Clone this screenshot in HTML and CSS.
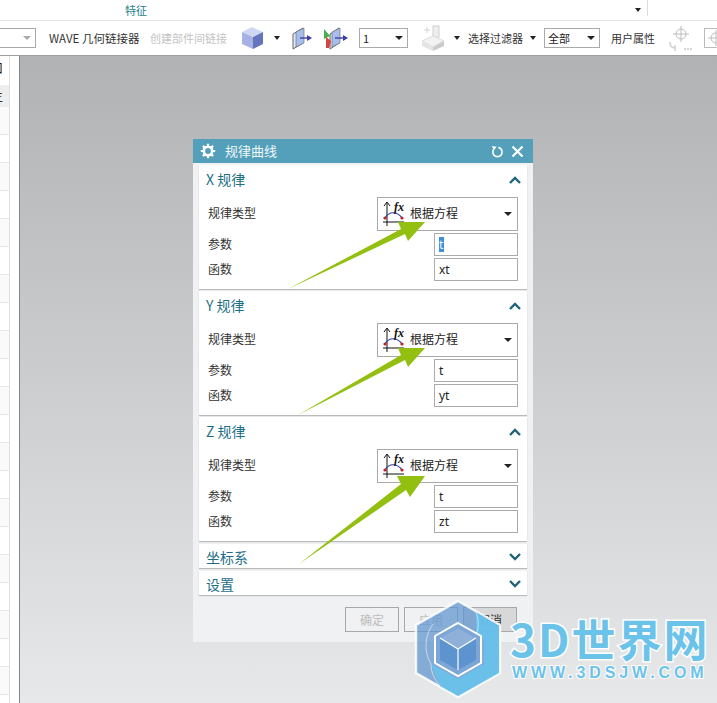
FILE: index.html
```html
<!DOCTYPE html>
<html lang="zh-CN">

<head>
    <meta charset="UTF-8">
    <meta name="viewport" content="width=device-width, initial-scale=1.0">
    <title>规律曲线</title>
    <link rel="stylesheet" href="styles.css">
</head>

<body>
    <!-- 顶部工具栏 -->
    <div class="tabs">
        <span class="tab-name">特征</span>
        <span class="caret tab-caret"></span>
        <span class="tab-line"></span>
    </div>
    <div class="toolbar">
        <div class="combo combo-cut"><span class="caret caret-off"></span></div>
        <span class="tool-text t-wave">WAVE 几何链接器</span>
        <span class="tool-text off t-link">创建部件间链接</span>
        <svg class="i-cube" width="23" height="24" viewBox="0 0 23 24">
            <polygon points="1,6 11,1 22,6 12,11" fill="#cfd8f2" />
            <polygon points="1,6 12,11 12,23 1,18" fill="#a6b2e4" />
            <polygon points="12,11 22,6 22,18 12,23" fill="#6674bb" />
        </svg>
        <span class="caret c-cube"></span>
        <svg class="i-face" width="21" height="24" viewBox="0 0 21 24">
            <polygon points="2,8 12,2 12,17 2,23" fill="#dfe6f6" stroke="#666" />
            <polygon points="5,6 13,2 13,17 5,21" fill="#a9bdec" stroke="#666" stroke-width=".6" />
            <path d="M9 12h8" stroke="#3c3fa8" stroke-width="1.4" />
            <polygon points="16,9 21,12 16,15" fill="#3c3fa8" />
        </svg>
        <svg class="i-face2" width="25" height="24" viewBox="0 0 25 24">
            <polygon points="7,8 16,2 16,17 7,23" fill="#dfe6f6" stroke="#666" />
            <polygon points="9,6 17,2 17,17 9,21" fill="#a9bdec" stroke="#666" stroke-width=".6" />
            <path d="M12 12h9" stroke="#3c3fa8" stroke-width="1.4" />
            <polygon points="20,9 25,12 20,15" fill="#3c3fa8" />
            <polygon points="1,3 7,10 1,13" fill="#45b04a" />
            <polygon points="3,11 8,15 6,22 3,22" fill="#d8433f" />
        </svg>
        <div class="combo combo-num"><span>1</span><span class="caret"></span></div>
        <svg class="i-filter" width="24" height="26" viewBox="0 0 24 26">
            <path d="M3 5h6M6 2v6" stroke="#d4d4d4" />
            <rect x="12" y="1" width="6" height="11" fill="#eee" stroke="#d0d0d0" />
            <polygon points="1,16 12,11 23,16 12,22" fill="#f2f2f2" stroke="#ddd" />
            <polygon points="1,16 12,22 12,26 1,21" fill="#e4e4e4" />
            <polygon points="12,22 23,16 23,21 12,26" fill="#cbcbcb" />
        </svg>
        <span class="caret c-filter"></span>
        <span class="tool-text t-filter">选择过滤器</span>
        <span class="caret c-filter2"></span>
        <div class="combo combo-all"><span>全部</span><span class="caret"></span></div>
        <span class="tool-text t-attr">用户属性</span>
        <svg class="i-snap" width="24" height="26" viewBox="0 0 24 26">
            <circle cx="12" cy="9" r="5" fill="none" stroke="#bdbdbd" />
            <path d="M12 1v16M4 9h16" stroke="#bdbdbd" />
            <path d="M1 17c0 4 2 6 5 6M6 20v6" stroke="#cdd4cd" stroke-width="1.6" fill="none" />
            <path d="M15 24h2M18 24h2M21 24h2" stroke="#aaa" />
        </svg>
        <div class="snap-box">
            <svg width="18" height="18" viewBox="0 0 18 18">
                <circle cx="11" cy="9" r="5" fill="none" stroke="#bdbdbd" />
                <path d="M11 1v16M3 9h15" stroke="#bdbdbd" />
            </svg>
        </div>
    </div>

    <div class="main">
        <div class="sidebar">
            <div class="side-list">
                <div class="side-top">口</div>
                <div class="side-sel">主</div>
            </div>
        </div>

        <div class="canvas">
            <!-- 对话框 -->
            <div class="dialog">
                <div class="dialog-head">
                    <svg width="16" height="16" viewBox="0 0 16 16">
                        <circle cx="8" cy="8" r="4.2" fill="none" stroke="#fff" stroke-width="2.6" />
                        <path d="M8 .8v3M8 12.2v3M.8 8h3M12.2 8h3M2.9 2.9 5 5M11 11l2.1 2.1M13.1 2.9 11 5M5 11l-2.1 2.1" stroke="#fff" stroke-width="2.2" />
                    </svg>
                    <span class="dialog-title">规律曲线</span>
                    <svg class="head-reset" width="13" height="13" viewBox="0 0 14 14">
                        <path d="M8 2.6a5 5 0 1 1-5.4 2.4" fill="none" stroke="#fff" stroke-width="1.8" />
                        <polygon points="1,1 6,2 3,6" fill="#fff" />
                    </svg>
                    <svg width="13" height="13" viewBox="0 0 13 13">
                        <path d="M1.5 1.5l10 10M11.5 1.5l-10 10" stroke="#fff" stroke-width="2.2" />
                    </svg>
                </div>
                <div class="dialog-body">
                    <div class="panel">
                        <div class="panel-title"><span>X 规律</span><svg class="chev" width="12" height="8" viewBox="0 0 12 8"><path d="M1 7l5-5 5 5" fill="none" stroke="#1f6478" stroke-width="2.4" /></svg></div>
                        <div class="law-row">
                            <span>规律类型</span>
                            <div class="law-select">
                                <svg width="28" height="28" viewBox="0 0 28 28">
                                    <path d="M5 26V3M2 6l3-4 3 4M1 22h21" fill="none" stroke="#111" />
                                    <path d="M3 18c4-7 12-7 17 0" fill="none" stroke="#2b3fa8" stroke-width="1.2" />
                                    <circle cx="3" cy="18" r="1.6" fill="#b22" />
                                    <circle cx="20" cy="18" r="1.6" fill="#b22" />
                                    <text x="12" y="11" class="fx">fx</text>
                                </svg>
                                <span class="law-name">根据方程</span>
                                <span class="caret"></span>
                            </div>
                        </div>
                        <div class="field-row"><span>参数</span><div class="field"><span class="picked">t</span></div></div>
                        <div class="field-row"><span>函数</span><div class="field">xt</div></div>
                    </div>

                    <div class="panel">
                        <div class="panel-title"><span>Y 规律</span><svg class="chev" width="12" height="8" viewBox="0 0 12 8"><path d="M1 7l5-5 5 5" fill="none" stroke="#1f6478" stroke-width="2.4" /></svg></div>
                        <div class="law-row">
                            <span>规律类型</span>
                            <div class="law-select">
                                <svg width="28" height="28" viewBox="0 0 28 28">
                                    <path d="M5 26V3M2 6l3-4 3 4M1 22h21" fill="none" stroke="#111" />
                                    <path d="M3 18c4-7 12-7 17 0" fill="none" stroke="#2b3fa8" stroke-width="1.2" />
                                    <circle cx="3" cy="18" r="1.6" fill="#b22" />
                                    <circle cx="20" cy="18" r="1.6" fill="#b22" />
                                    <text x="12" y="11" class="fx">fx</text>
                                </svg>
                                <span class="law-name">根据方程</span>
                                <span class="caret"></span>
                            </div>
                        </div>
                        <div class="field-row"><span>参数</span><div class="field">t</div></div>
                        <div class="field-row"><span>函数</span><div class="field">yt</div></div>
                    </div>

                    <div class="panel">
                        <div class="panel-title"><span>Z 规律</span><svg class="chev" width="12" height="8" viewBox="0 0 12 8"><path d="M1 7l5-5 5 5" fill="none" stroke="#1f6478" stroke-width="2.4" /></svg></div>
                        <div class="law-row">
                            <span>规律类型</span>
                            <div class="law-select">
                                <svg width="28" height="28" viewBox="0 0 28 28">
                                    <path d="M5 26V3M2 6l3-4 3 4M1 22h21" fill="none" stroke="#111" />
                                    <path d="M3 18c4-7 12-7 17 0" fill="none" stroke="#2b3fa8" stroke-width="1.2" />
                                    <circle cx="3" cy="18" r="1.6" fill="#b22" />
                                    <circle cx="20" cy="18" r="1.6" fill="#b22" />
                                    <text x="12" y="11" class="fx">fx</text>
                                </svg>
                                <span class="law-name">根据方程</span>
                                <span class="caret"></span>
                            </div>
                        </div>
                        <div class="field-row"><span>参数</span><div class="field">t</div></div>
                        <div class="field-row"><span>函数</span><div class="field">zt</div></div>
                    </div>

                    <div class="panel panel-shut">
                        <div class="panel-title"><span>坐标系</span><svg class="chev" width="12" height="8" viewBox="0 0 12 8"><path d="M1 1l5 5 5-5" fill="none" stroke="#1f6478" stroke-width="2.4" /></svg></div>
                    </div>
                    <div class="panel panel-shut">
                        <div class="panel-title"><span>设置</span><svg class="chev" width="12" height="8" viewBox="0 0 12 8"><path d="M1 1l5 5 5-5" fill="none" stroke="#1f6478" stroke-width="2.4" /></svg></div>
                    </div>

                    <div class="dialog-foot">
                        <button class="btn" disabled>确定</button>
                        <button class="btn" disabled>应用</button>
                        <button class="btn btn-cancel">取消</button>
                    </div>
                </div>
            </div>
        </div>
    </div>

    <!-- 绿色箭头 -->
    <svg class="arrows" width="717" height="703" viewBox="0 0 717 703">
        <polygon points="288,289 401,229 398,222 425,222 408,241 405,234" />
        <polygon points="298,415 401,355 398,348 425,348 408,367 405,360" />
        <polygon points="299,564 401,484 397,476 425,476 410,497 406,490" />
    </svg>

    <!-- 水印 -->
    <div class="mark">
        <svg width="90" height="102" viewBox="0 0 90 102">
            <polygon points="45,3 87,27 87,75 45,99 3,75 3,27" fill="#5d94cf" fill-opacity=".72" stroke="#fff" stroke-opacity=".85" stroke-width="2.5" />
            <path d="M63 14 86 28v47L45 98 27 88 18 66l27 15 26-15V41l-8-5z" fill="#68c2ec" fill-opacity=".9" />
            <path d="M63 14c3 9 3 16 0 22M18 66c-7-12-7-27 2-40M27 88c-6-7-9-14-9-22" fill="none" stroke="#fff" stroke-opacity=".55" />
            <polygon points="45,25 68,38 68,65 45,78 22,65 22,38" fill="#7ba6d6" stroke="#fff" stroke-width="2" />
            <polygon points="45,30 63,40 63,62 45,72 27,62 27,40" fill="#5d94cf" />
            <polygon points="45,30 63,40 45,51 27,40" fill="#8fb0d8" />
            <path d="M45 51v21M45 51 27 40M45 51l18-11" stroke="#fff" stroke-width="1.2" />
        </svg>
        <div class="mark-text">
            <div class="mark-name">3D世界网</div>
            <div class="mark-url">WWW.3DSJW.COM</div>
        </div>
    </div>
</body>

</html>
```

FILE: styles.css
```css
* {
    box-sizing: border-box;
}

body {
    margin: 0;
    width: 717px;
    height: 703px;
    overflow: hidden;
    position: relative;
    display: flex;
    flex-direction: column;
    font-family: "Noto Sans CJK SC", "Noto Sans", sans-serif;
    font-size: 12px;
    color: #333;
    background: #fff;
}

.caret {
    display: inline-block;
    width: 0;
    height: 0;
    flex: none;
    border-left: 4px solid transparent;
    border-right: 4px solid transparent;
    border-top: 4px solid #222;
}

.caret-off {
    border-top-color: #aaa;
}

/* 顶部 */
.tabs {
    height: 21px;
    flex: none;
    display: flex;
    align-items: center;
    padding-left: 125px;
    border-bottom: 1px solid #e2e2e2;
}

.tab-name {
    font-size: 11px;
    color: #1d7d8c;
}

.tab-caret {
    margin-left: 488px;
    border-left-width: 3px;
    border-right-width: 3px;
}

.tab-line {
    width: 1px;
    height: 16px;
    margin-left: 6px;
    margin-top: -4px;
    background: #ddd;
}

.toolbar {
    height: 35px;
    flex: none;
    display: flex;
    align-items: center;
    white-space: nowrap;
    overflow: hidden;
    border-bottom: 1px solid #9c9d9f;
}

.tool-text {
    font-size: 11px;
    flex: none;
}

.tool-text.off {
    color: #c4c4c4;
}

.combo {
    height: 20px;
    flex: none;
    display: flex;
    align-items: center;
    justify-content: space-between;
    padding: 0 4px 0 3px;
    border: 1px solid #aaa;
    background: #fff;
    font-size: 11px;
    color: #222;
}

.combo-cut {
    width: 37px;
    margin-left: -1px;
    justify-content: flex-end;
}

.t-wave {
    margin-left: 13px;
    width: 90px;
    font-size: 11.5px;
}

.t-link {
    margin-left: 11px;
    width: 78px;
}

.i-cube {
    margin-left: 13px;
    flex: none;
}

.c-cube {
    margin-left: 10px;
    border-left-width: 3px;
    border-right-width: 3px;
}

.i-face {
    margin-left: 11px;
    flex: none;
}

.i-face2 {
    margin-left: 11px;
    flex: none;
}

.combo-num {
    width: 49px;
    margin-left: 11px;
}

.i-filter {
    margin-left: 13px;
    flex: none;
}

.c-filter {
    margin-left: 9px;
    border-left-width: 3px;
    border-right-width: 3px;
}

.t-filter {
    margin-left: 8px;
    width: 56px;
}

.c-filter2 {
    margin-left: 6px;
    border-left-width: 3px;
    border-right-width: 3px;
}

.combo-all {
    width: 56px;
    margin-left: 8px;
}

.t-attr {
    margin-left: 11px;
    width: 44px;
}

.i-snap {
    margin-left: 14px;
    flex: none;
}

.snap-box {
    width: 24px;
    height: 20px;
    flex: none;
    margin-left: 11px;
    border: 1px solid #bbb;
    display: flex;
    align-items: center;
}

/* 主区域 */
.main {
    flex: 1;
    display: flex;
    min-height: 0;
}

.sidebar {
    width: 20px;
    flex: none;
    background: #fff;
    border-right: 1px solid #858689;
}

.side-list {
    width: 10px;
    height: 100%;
    border-right: 1px solid #e0e0e0;
    overflow: hidden;
    background: repeating-linear-gradient(#fff 0, #fff 27px, #e6e6e6 27px, #e6e6e6 28px, #fafafa 28px, #fafafa 55px, #e6e6e6 55px, #e6e6e6 56px) 0 23px;
}

.side-top {
    height: 29px;
    padding-top: 3px;
    margin-left: -9px;
    font-size: 12px;
    color: #111;
    background: #fff;
}

.side-sel {
    height: 22px;
    margin-left: -9px;
    padding-left: 9px;
    text-indent: -9px;
    font-size: 12px;
    line-height: 22px;
    background: #eee;
}

.canvas {
    flex: 1;
    padding: 83px 0 0 173px;
    background: linear-gradient(#b1b2b4, #e7e8e9);
}

/* 对话框 */
.dialog {
    width: 340px;
    height: 503px;
}

.dialog-head {
    height: 24px;
    display: flex;
    align-items: center;
    padding: 0 9px 0 7px;
    background: #54a0ba;
    color: #f2f8fa;
}

.dialog-title {
    font-size: 13px;
    margin-left: 9px;
    margin-top: -2px;
    flex: 1;
}

.head-reset {
    margin-right: 7px;
}

.dialog-body {
    height: 479px;
    padding: 2px 6px 0;
    background: #eff1f2;
}

.panel {
    height: 124px;
    margin-bottom: 2px;
    padding: 0 9px;
    background: #fff;
    box-shadow: 0 1px 1px #bbb;
}

.panel-shut {
    height: 24px;
    margin-top: 3px;
    margin-bottom: 3px;
}

.panel-title {
    height: 32px;
    display: flex;
    align-items: center;
    justify-content: space-between;
    padding-bottom: 3px;
    margin: 0 -3px 0 -2px;
    font-size: 14px;
    color: #1e6f86;
}

.panel-title > span {
    margin-top: -2px;
}

.panel-shut .panel-title {
    height: 24px;
    padding-top: 2px;
    padding-bottom: 0;
}

.panel-shut .panel-title > span {
    margin-top: 0;
}

.panel-shut .chev {
    margin-top: -1px;
}

.law-row {
    height: 34px;
    display: flex;
    align-items: center;
    justify-content: space-between;
}

.law-row > span {
    margin-top: -3px;
}

.law-select {
    width: 141px;
    height: 34px;
    display: flex;
    align-items: center;
    padding: 0 5px 0 4px;
    border: 1px solid #a9a9a9;
    color: #222;
}

.law-name {
    flex: 1;
    margin-top: -4px;
}

.fx {
    font-family: "Liberation Serif", serif;
    font-style: italic;
    font-weight: bold;
    font-size: 12px;
    fill: #111;
}

.field-row {
    height: 23px;
    margin-top: 2px;
    display: flex;
    align-items: center;
    justify-content: space-between;
}

.field-row > span {
    margin-top: -2px;
}

.field {
    width: 84px;
    height: 23px;
    padding-left: 4px;
    border: 1px solid #ababab;
    line-height: 21px;
    color: #222;
    font-family: "Noto Sans", sans-serif;
}

.picked {
    display: inline-block;
    width: 5px;
    height: 15px;
    line-height: 15px;
    background: #3f8fdc;
    color: #e8f2fb;
}

.dialog-foot {
    display: flex;
    justify-content: flex-end;
    gap: 5px;
    padding: 9px 10px 0 0;
}

.btn {
    width: 54px;
    height: 25px;
    padding: 0;
    border: 1px solid #a8a8a8;
    background: #eff1f2;
    font-family: inherit;
    font-size: 12px;
    color: #bdbdbd;
}

.btn-cancel {
    background: #d8d8d8;
    color: #333;
}

/* 覆盖层 */
.arrows {
    position: absolute;
    left: 0;
    top: 0;
    pointer-events: none;
    fill: #93c010;
}

.mark {
    position: absolute;
    left: 413px;
    top: 598px;
    display: flex;
    pointer-events: none;
}

.mark-text {
    margin-left: 7px;
    width: 204px;
}

.mark-name {
    margin-top: 14px;
    font-family: "Noto Sans CJK SC", sans-serif;
    font-size: 44px;
    font-weight: 700;
    line-height: 52px;
    letter-spacing: 2px;
    white-space: nowrap;
    color: #6cc3ea;
    -webkit-text-stroke: 3px #fff;
    paint-order: stroke fill;
}

.mark-url {
    margin-top: 1px;
    margin-left: 2px;
    font-family: "Liberation Sans", sans-serif;
    font-size: 16px;
    font-weight: 700;
    line-height: 16px;
    letter-spacing: 3.9px;
    white-space: nowrap;
    color: #6cc3ea;
    -webkit-text-stroke: 2px #fff;
    paint-order: stroke fill;
}
```
